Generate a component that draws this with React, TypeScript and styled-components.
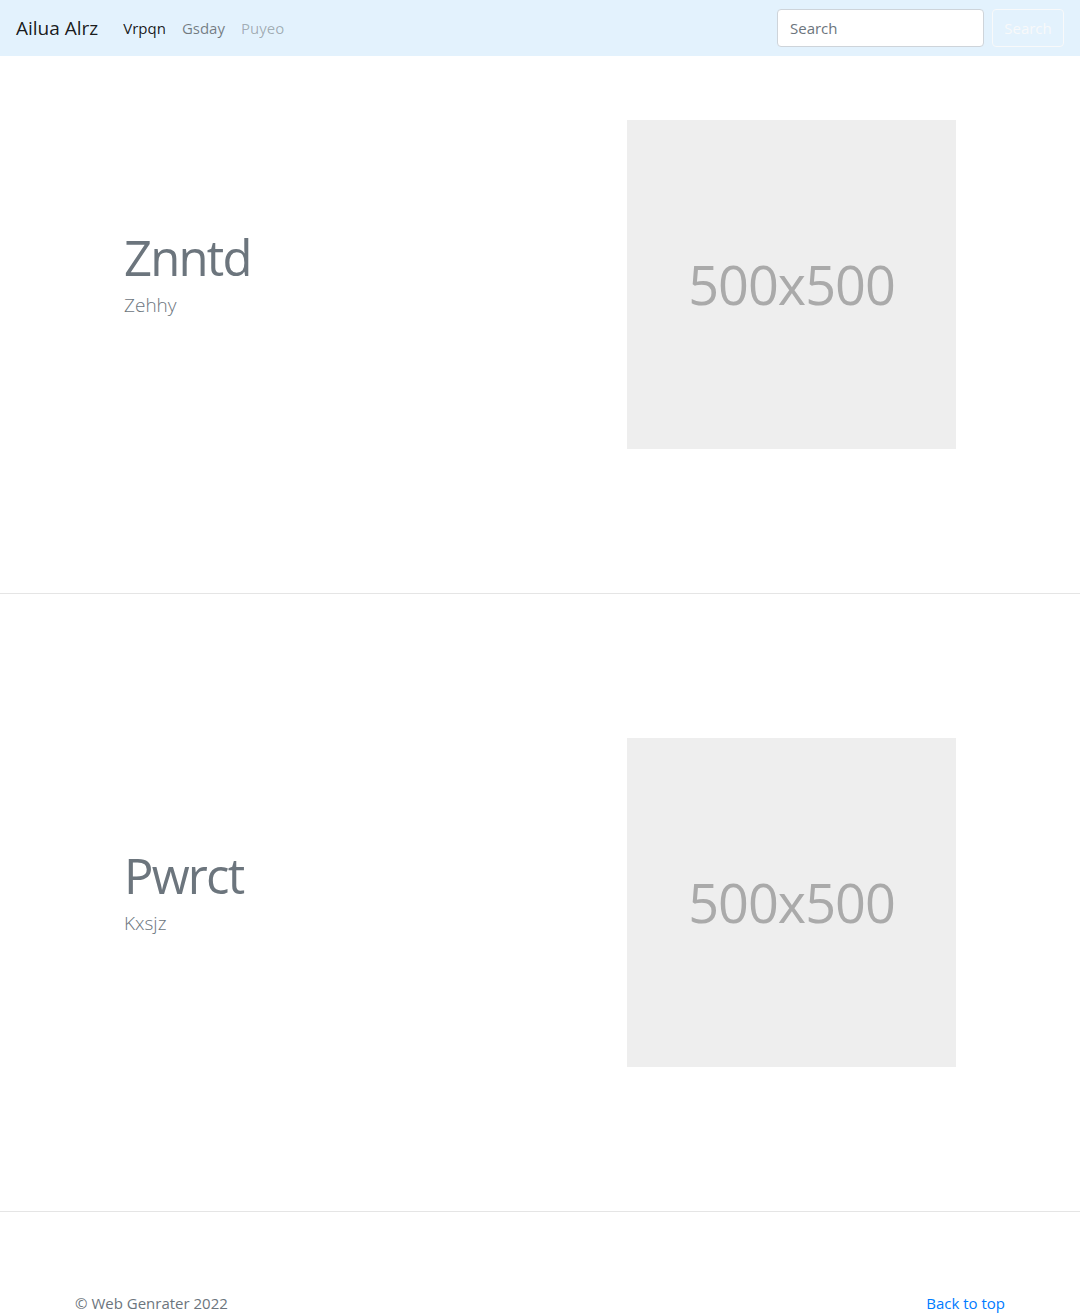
import React from "react";
import styled, { createGlobalStyle } from "styled-components";

const Global = createGlobalStyle`
  * { box-sizing: border-box; }
  body {
    margin: 0;
    font-family: "Open Sans", "Noto Sans", sans-serif;
    font-size: 15px;
    line-height: 1.5;
    color: #212529;
    background: #fff;
  }
`;

const NavBar = styled.nav`
  height: 56px;
  background: #e3f2fd;
  display: flex;
  align-items: center;
  padding: 0 16px;
`;

const Brand = styled.a`
  font-size: 19px;
  color: rgba(0, 0, 0, 0.9);
  text-decoration: none;
  margin-right: 17px;
  line-height: 1.5;
`;

const NavList = styled.div`
  display: flex;
  flex: 1;
`;

const NavLink = styled.a<{ $tone: "active" | "normal" | "disabled" }>`
  padding: 8px;
  font-size: 15px;
  text-decoration: none;
  color: ${(p) =>
    p.$tone === "active"
      ? "rgba(0,0,0,0.9)"
      : p.$tone === "normal"
      ? "rgba(0,0,0,0.5)"
      : "rgba(0,0,0,0.3)"};
`;

const SearchForm = styled.form`
  display: flex;
  align-items: center;
  gap: 8px;
`;

const SearchInput = styled.input`
  width: 207px;
  height: 38px;
  padding: 6px 12px;
  font-family: inherit;
  font-size: 15px;
  color: #495057;
  background: #fff;
  border: 1px solid #ced4da;
  border-radius: 4px;
  outline: none;
  &::placeholder { color: #6c757d; }
`;

const SearchButton = styled.button`
  height: 38px;
  width: 72px;
  padding: 6px 10px;
  font-family: inherit;
  font-size: 15px;
  color: #f8f9fa;
  background: transparent;
  border: 1px solid #f8f9fa;
  border-radius: 4px;
`;

const Section = styled.section<{ $top: number }>`
  border-bottom: 1px solid #e5e5e5;
  padding: ${(p) => p.$top}px 0 144px;
`;

const Row = styled.div`
  width: 960px;
  margin: 0 auto;
  padding: 0 64px;
  display: grid;
  grid-template-columns: 1fr 1fr;
  align-items: center;
`;

const TextCol = styled.div``;

const Heading = styled.h2`
  margin: 0 0 4px;
  font-size: 49px;
  font-weight: 400;
  line-height: 1.2;
  letter-spacing: -1.8px;
  color: #6c757d;
`;

const Lead = styled.p`
  margin: 0 0 22px;
  font-size: 19px;
  font-weight: 300;
  line-height: 1.5;
  color: #6c757d;
`;

const ImageCol = styled.div`
  display: flex;
  justify-content: flex-end;
`;

const Placeholder = styled.div`
  width: 329px;
  height: 329px;
  background: #eee;
  color: #aaa;
  display: flex;
  align-items: center;
  justify-content: center;
  font-size: 54px;
  letter-spacing: -1px;
`;

const Footer = styled.footer`
  width: 960px;
  margin: 0 auto;
  padding: 80px 15px 48px;
  display: flex;
  justify-content: space-between;
  color: #6c757d;
  font-size: 15px;
`;

const FooterText = styled.p`
  margin: 0;
`;

const TopLink = styled.a`
  color: #007bff;
  text-decoration: none;
`;

const features = [
  { title: "Znntd", lead: "Zehhy", top: 64 },
  { title: "Pwrct", lead: "Kxsjz", top: 144 },
];

export default function App() {
  return (
    <>
      <Global />
      <NavBar>
        <Brand href="#">Ailua Alrz</Brand>
        <NavList>
          <NavLink $tone="active" href="#">Vrpqn</NavLink>
          <NavLink $tone="normal" href="#">Gsday</NavLink>
          <NavLink $tone="disabled" href="#">Puyeo</NavLink>
        </NavList>
        <SearchForm onSubmit={(e) => e.preventDefault()}>
          <SearchInput placeholder="Search" />
          <SearchButton type="submit">Search</SearchButton>
        </SearchForm>
      </NavBar>
      {features.map((f) => (
        <Section key={f.title} $top={f.top}>
          <Row>
            <TextCol>
              <Heading>{f.title}</Heading>
              <Lead>{f.lead}</Lead>
            </TextCol>
            <ImageCol>
              <Placeholder>500x500</Placeholder>
            </ImageCol>
          </Row>
        </Section>
      ))}
      <Footer>
        <FooterText>© Web Genrater 2022</FooterText>
        <TopLink href="#">Back to top</TopLink>
      </Footer>
    </>
  );
}
